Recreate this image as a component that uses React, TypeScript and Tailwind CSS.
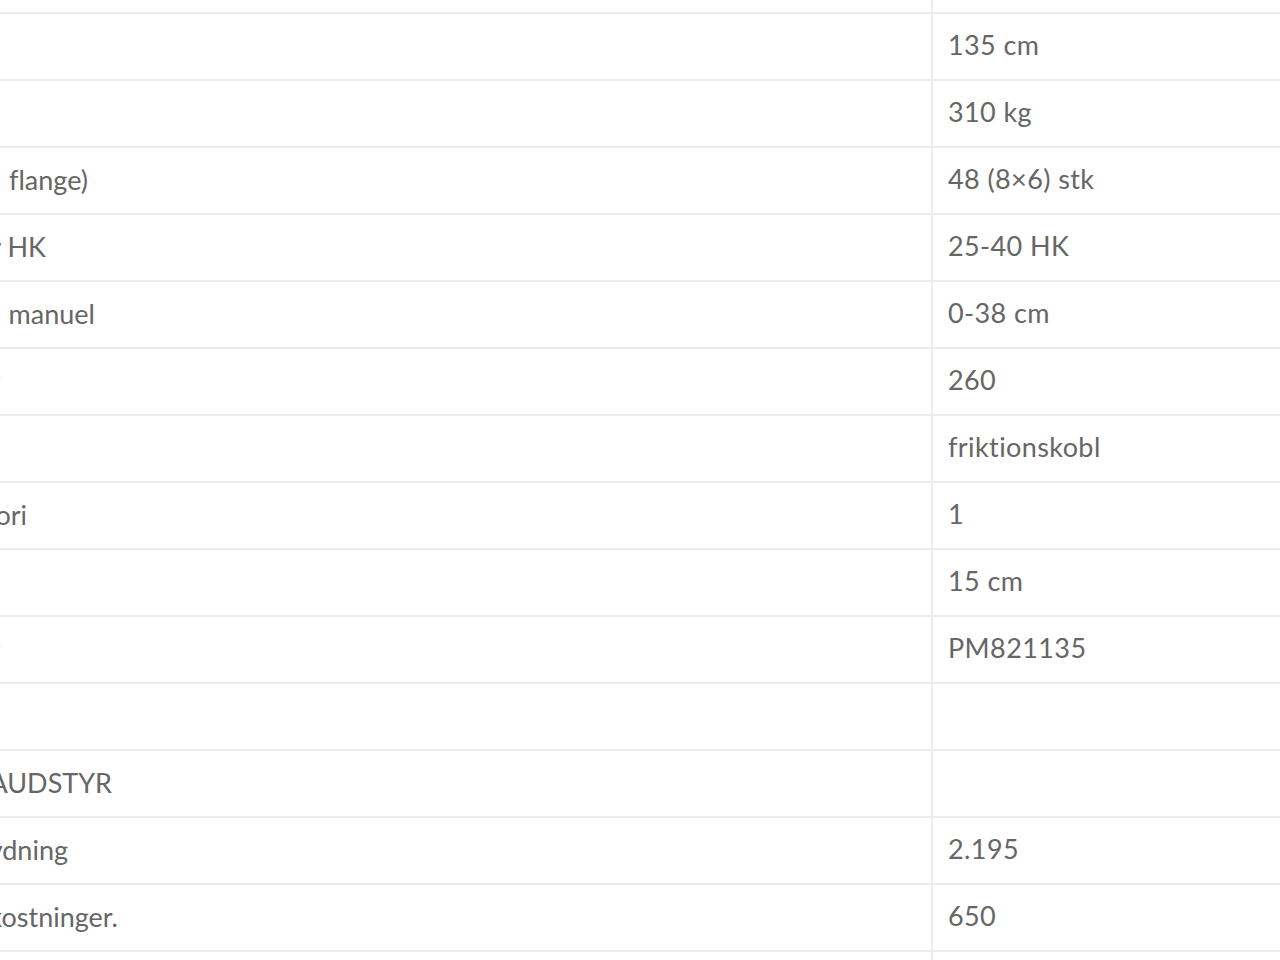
import React from 'react';

type Row = {
  label: string;
  value: string;
  // where the (clipped) label ends on screen
  cut: string;
};

const rows: Row[] = [
  { label: 'Arbejdsbredde', value: '135 cm', cut: 'w-0' },
  { label: 'Vægt', value: '310 kg', cut: 'w-0' },
  { label: 'Antal knive (Y  flange)', value: '48 (8×6) stk', cut: 'w-[88px]' },
  { label: 'Min. traktor HK', value: '25-40 HK', cut: 'w-[46px]' },
  { label: 'Klippehøjde  manuel', value: '0-38 cm', cut: 'w-[95px]' },
  { label: 'Omdrejninger', value: '260', cut: 'w-0' },
  { label: 'Kobling', value: 'friktionskobl', cut: 'w-0' },
  { label: 'Kategori', value: '1', cut: 'w-[27px]' },
  { label: 'Overlap', value: '15 cm', cut: 'w-0' },
  { label: 'Varenummer', value: 'PM821135', cut: 'w-0' },
  { label: '', value: '', cut: 'w-0' },
  { label: 'EKSTRAUDSTYR', value: '', cut: 'w-[112px]' },
  { label: 'Hydraulisk sideforskydning', value: '2.195', cut: 'w-[68px]' },
  { label: 'Montering og fragtomkostninger.', value: '650', cut: 'w-[118px]' },
];

const SpecRow = ({ row }: { row: Row }) => (
  <div className="flex h-[67px] border-b-2 border-[#ececec]">
    <div className="w-[933px] shrink-0 flex items-center border-r-2 border-[#ececec]">
      <div className={'flex justify-end whitespace-pre ' + row.cut}>{row.label}</div>
    </div>
    <div className="flex-1 flex items-center pl-[15px] pb-[2px] whitespace-nowrap tracking-[0.4px]">
      {row.value}
    </div>
  </div>
);

export default function App() {
  return (
    <div
      className="w-[1280px] h-[960px] overflow-hidden bg-white text-[27px] text-[#666666] [font-variant-ligatures:none]"
      style={{ fontFamily: 'Lato, "Open Sans", sans-serif' }}
    >
      {/* tail of the row above */}
      <div className="flex h-[14px] border-b-2 border-[#ececec]">
        <div className="w-[933px] shrink-0 border-r-2 border-[#ececec]" />
        <div className="flex-1" />
      </div>
      {rows.map((row, i) => (
        <SpecRow key={i} row={row} />
      ))}
      <div className="flex h-[67px]">
        <div className="w-[933px] shrink-0 border-r-2 border-[#ececec]" />
        <div className="flex-1" />
      </div>
    </div>
  );
}
